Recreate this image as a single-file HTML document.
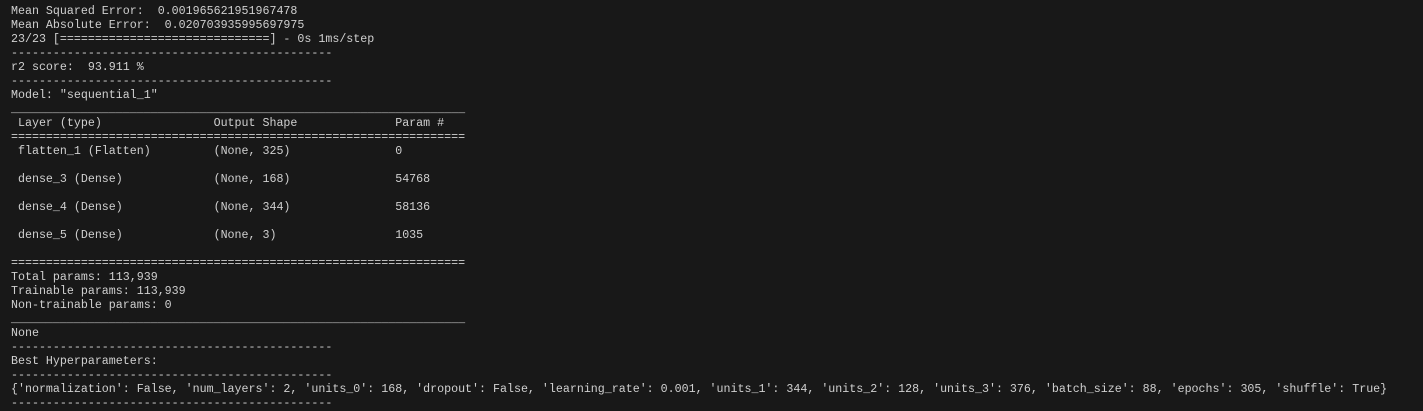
<!DOCTYPE html>
<html><head><meta charset="utf-8"><style>
html,body{margin:0;padding:0;background:#181818;width:1423px;height:406px;overflow:hidden}
pre{margin:0;position:absolute;left:11px;top:5px;font-family:"Liberation Mono","DejaVu Sans Mono",monospace;font-size:11.65px;line-height:14px;color:#d0d0d0;white-space:pre}
</style></head><body>
<pre>Mean Squared Error:  0.001965621951967478
Mean Absolute Error:  0.020703935995697975
23/23 [==============================] - 0s 1ms/step
----------------------------------------------
r2 score:  93.911 %
----------------------------------------------
Model: "sequential_1"
_________________________________________________________________
 Layer (type)                Output Shape              Param #   
=================================================================
 flatten_1 (Flatten)         (None, 325)               0         
                                                                 
 dense_3 (Dense)             (None, 168)               54768     
                                                                 
 dense_4 (Dense)             (None, 344)               58136     
                                                                 
 dense_5 (Dense)             (None, 3)                 1035      
                                                                 
=================================================================
Total params: 113,939
Trainable params: 113,939
Non-trainable params: 0
_________________________________________________________________
None
----------------------------------------------
Best Hyperparameters:
----------------------------------------------
{'normalization': False, 'num_layers': 2, 'units_0': 168, 'dropout': False, 'learning_rate': 0.001, 'units_1': 344, 'units_2': 128, 'units_3': 376, 'batch_size': 88, 'epochs': 305, 'shuffle': True}
----------------------------------------------</pre>
</body></html>
